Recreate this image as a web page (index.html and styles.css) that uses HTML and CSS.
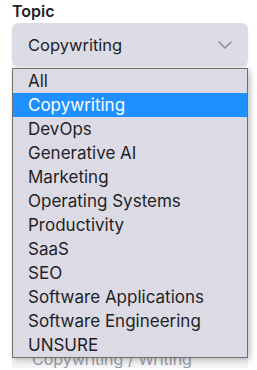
FILE: index.html
```html
<!DOCTYPE html>
<html lang="en">
<head>
    <meta charset="UTF-8">
    <meta name="viewport" content="width=device-width, initial-scale=1.0">
    <title>Topic</title>
    <link rel="stylesheet" href="styles.css">
</head>
<body>
    <div class="field">
        <label class="label">Topic</label>
        <div class="select">
            <span>Copywriting</span>
            <svg class="chevron" width="14" height="8" viewBox="0 0 14 8">
                <path d="M1 1 L7 7 L13 1" fill="none" stroke="#8e8e9c" stroke-width="1.6" stroke-linecap="round" stroke-linejoin="round"/>
            </svg>
        </div>
        <ul class="menu">
            <li>All</li>
            <li class="active">Copywriting</li>
            <li>DevOps</li>
            <li>Generative AI</li>
            <li>Marketing</li>
            <li>Operating Systems</li>
            <li>Productivity</li>
            <li>SaaS</li>
            <li>SEO</li>
            <li>Software Applications</li>
            <li>Software Engineering</li>
            <li>UNSURE</li>
        </ul>
    </div>
    <div class="card">
        <div class="card-value">Copywriting / Writing</div>
    </div>
</body>
</html>
```

FILE: styles.css
```css
* {
    margin: 0;
    padding: 0;
    box-sizing: border-box;
    font-family: 'Inter', 'Noto Sans', sans-serif;
}

body {
    background: #ffffff;
    color: #1f1f26;
    padding: 0 9px 0 12px;
}

.field {
    position: relative;
    padding-top: 2px;
}

.label {
    display: block;
    font-size: 16px;
    font-weight: 600;
    line-height: 19px;
    margin-bottom: 2px;
}

.select {
    display: flex;
    justify-content: space-between;
    align-items: center;
    height: 43px;
    padding: 0 16px 0 16px;
    background: #dcdce6;
    border-radius: 6px;
    box-shadow: 0 2px 3px rgba(0, 0, 0, 0.08);
    font-size: 16.5px;
}

.menu {
    position: absolute;
    top: 68px;
    left: 0;
    width: 236px;
    list-style: none;
    background: #dcdbe5;
    border: 1px solid #707070;
    box-shadow: 2px 2px 6px rgba(0, 0, 0, 0.25);
    z-index: 2;
}

.menu li {
    height: 24px;
    line-height: 24px;
    padding-left: 15px;
    font-size: 17px;
    color: #1f1f26;
}

.menu li.active {
    background: #1e90ff;
    color: #ffffff;
}

.card {
    margin-top: 88px;
    height: 214px;
    background: #f4f4f6;
    display: flex;
    align-items: flex-end;
    padding: 0 0 0 20px;
}

.card-value {
    font-size: 16px;
    line-height: 18px;
    color: #9a9aa4;
}
```
